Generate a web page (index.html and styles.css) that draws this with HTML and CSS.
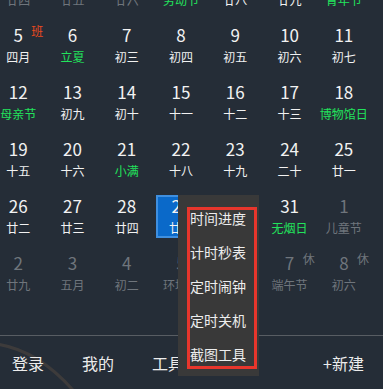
FILE: index.html
```html
<!DOCTYPE html>
<html lang="zh-CN">
<head>
  <meta charset="UTF-8">
  <title>日历</title>
  <meta name="viewport" content="width=device-width, initial-scale=1">
  <link rel="stylesheet" href="styles.css">
</head>
<body>

  <div class="app">
    <div class="calendar">
      <!-- week of Apr 28 -->
      <div class="day other"><div class="cell"><span class="num">28</span><span class="lunar">廿四</span></div></div>
      <div class="day other"><div class="cell"><span class="num">29</span><span class="lunar">廿五</span></div></div>
      <div class="day other"><div class="cell"><span class="num">30</span><span class="lunar">廿六</span></div></div>
      <div class="day"><div class="cell"><span class="num">1</span><span class="lunar fest">劳动节</span></div></div>
      <div class="day"><div class="cell"><span class="num">2</span><span class="lunar">廿八</span></div></div>
      <div class="day"><div class="cell"><span class="num">3</span><span class="lunar">廿九</span></div></div>
      <div class="day"><div class="cell"><span class="num">4</span><span class="lunar fest">青年节</span></div></div>

      <div class="day"><div class="cell"><span class="num">5</span><span class="lunar">四月</span><span class="tag work">班</span></div></div>
      <div class="day"><div class="cell"><span class="num">6</span><span class="lunar fest">立夏</span></div></div>
      <div class="day"><div class="cell"><span class="num">7</span><span class="lunar">初三</span></div></div>
      <div class="day"><div class="cell"><span class="num">8</span><span class="lunar">初四</span></div></div>
      <div class="day"><div class="cell"><span class="num">9</span><span class="lunar">初五</span></div></div>
      <div class="day"><div class="cell"><span class="num">10</span><span class="lunar">初六</span></div></div>
      <div class="day"><div class="cell"><span class="num">11</span><span class="lunar">初七</span></div></div>

      <div class="day"><div class="cell"><span class="num">12</span><span class="lunar fest">母亲节</span></div></div>
      <div class="day"><div class="cell"><span class="num">13</span><span class="lunar">初九</span></div></div>
      <div class="day"><div class="cell"><span class="num">14</span><span class="lunar">初十</span></div></div>
      <div class="day"><div class="cell"><span class="num">15</span><span class="lunar">十一</span></div></div>
      <div class="day"><div class="cell"><span class="num">16</span><span class="lunar">十二</span></div></div>
      <div class="day"><div class="cell"><span class="num">17</span><span class="lunar">十三</span></div></div>
      <div class="day"><div class="cell"><span class="num">18</span><span class="lunar fest">博物馆日</span></div></div>

      <div class="day"><div class="cell"><span class="num">19</span><span class="lunar">十五</span></div></div>
      <div class="day"><div class="cell"><span class="num">20</span><span class="lunar">十六</span></div></div>
      <div class="day"><div class="cell"><span class="num">21</span><span class="lunar fest">小满</span></div></div>
      <div class="day"><div class="cell"><span class="num">22</span><span class="lunar">十八</span></div></div>
      <div class="day"><div class="cell"><span class="num">23</span><span class="lunar">十九</span></div></div>
      <div class="day"><div class="cell"><span class="num">24</span><span class="lunar">二十</span></div></div>
      <div class="day"><div class="cell"><span class="num">25</span><span class="lunar">廿一</span></div></div>

      <div class="day"><div class="cell"><span class="num">26</span><span class="lunar">廿二</span></div></div>
      <div class="day"><div class="cell"><span class="num">27</span><span class="lunar">廿三</span></div></div>
      <div class="day"><div class="cell"><span class="num">28</span><span class="lunar">廿四</span></div></div>
      <div class="day"><div class="cell selected"><span class="num">29</span><span class="lunar">廿五</span></div></div>
      <div class="day"><div class="cell"><span class="num">30</span><span class="lunar">廿六</span></div></div>
      <div class="day"><div class="cell"><span class="num">31</span><span class="lunar fest">无烟日</span></div></div>
      <div class="day other"><div class="cell"><span class="num">1</span><span class="lunar">儿童节</span></div></div>

      <div class="day other"><div class="cell"><span class="num">2</span><span class="lunar">廿九</span></div></div>
      <div class="day other"><div class="cell"><span class="num">3</span><span class="lunar">五月</span></div></div>
      <div class="day other"><div class="cell"><span class="num">4</span><span class="lunar">初二</span></div></div>
      <div class="day other"><div class="cell"><span class="num">5</span><span class="lunar">环境日</span></div></div>
      <div class="day other"><div class="cell"><span class="num">6</span><span class="lunar">芒种</span></div></div>
      <div class="day other"><div class="cell"><span class="num">7</span><span class="lunar">端午节</span><span class="tag rest">休</span></div></div>
      <div class="day other"><div class="cell"><span class="num">8</span><span class="lunar">初六</span><span class="tag rest">休</span></div></div>
    </div>

    <div class="bottom">
      <svg class="glow" width="120" height="60" viewBox="0 0 120 60">
        <path d="M-4 8 Q40 14 78 60" fill="none" stroke="#6a5744" stroke-width="3" opacity="0.35"/>
      </svg>
      <span class="tab">登录</span>
      <span class="tab">我的</span>
      <span class="tab">工具</span>
      <span class="tab new">+新建</span>
    </div>

    <div class="menu">
      <div class="menu-list">
        <div class="menu-item">时间进度</div>
        <div class="menu-item">计时秒表</div>
        <div class="menu-item">定时闹钟</div>
        <div class="menu-item">定时关机</div>
        <div class="menu-item">截图工具</div>
      </div>
    </div>
  </div>

</body>
</html>
```

FILE: styles.css
```css
html, body {
  margin: 0;
  padding: 0;
}

body {
  font-family: "Microsoft YaHei", "Noto Sans CJK SC", "Noto Sans", sans-serif;
  background-color: #252d37;
  color: #f2f2f2;
  width: 383px;
  height: 389px;
  overflow: hidden;
}

.app {
  position: relative;
  display: flow-root;
  height: 389px;
}

.calendar {
  display: grid;
  grid-template-columns: repeat(7, 1fr);
  grid-auto-rows: 57px;
  width: 380px;
  margin: -40px 0 0 -9px;
}

.day {
  padding: 7px 2px;
}

.cell {
  position: relative;
  height: 43px;
  box-sizing: border-box;
  padding-top: 2px;
  display: flex;
  flex-direction: column;
  align-items: center;
}

.cell.selected {
  background: #0a69c9;
  border: 2px solid #3f8fdf;
  padding-top: 0;
}

.num {
  font-size: 17px;
  line-height: 18px;
}

.lunar {
  font-size: 12px;
  line-height: 14px;
  margin-top: 6px;
  white-space: nowrap;
}

.lunar.fest {
  color: #22e35c;
}

.tag {
  position: absolute;
  right: 0;
  top: 0;
  font-size: 12px;
  line-height: 14px;
}

.tag.work {
  color: #ec4a1e;
}

.other .num,
.other .lunar,
.tag.rest {
  color: #6f757c;
}

.bottom {
  position: relative;
  margin-top: 33px;
  border-top: 1px solid #585d63;
  height: 53px;
  display: flex;
  align-items: center;
  gap: 38px;
  padding: 0 19px 0 12px;
}

.glow {
  position: absolute;
  left: 0;
  top: 0;
}

.tab {
  position: relative;
  font-size: 16px;
  color: #ececec;
}

.tab.new {
  margin-left: auto;
}

.menu {
  position: absolute;
  left: 178px;
  top: 195px;
  width: 81px;
  box-sizing: border-box;
  padding: 12px 2px 7px 9px;
  background: #393939;
}

.menu-list {
  width: 70px;
  box-sizing: border-box;
  border: 3px solid #e8362c;
  padding-bottom: 4px;
}

.menu-item {
  font-size: 14px;
  line-height: 16px;
  color: #ededed;
  white-space: nowrap;
  margin-bottom: 18px;
}

.menu-item:last-child {
  margin-bottom: 0;
}
```
